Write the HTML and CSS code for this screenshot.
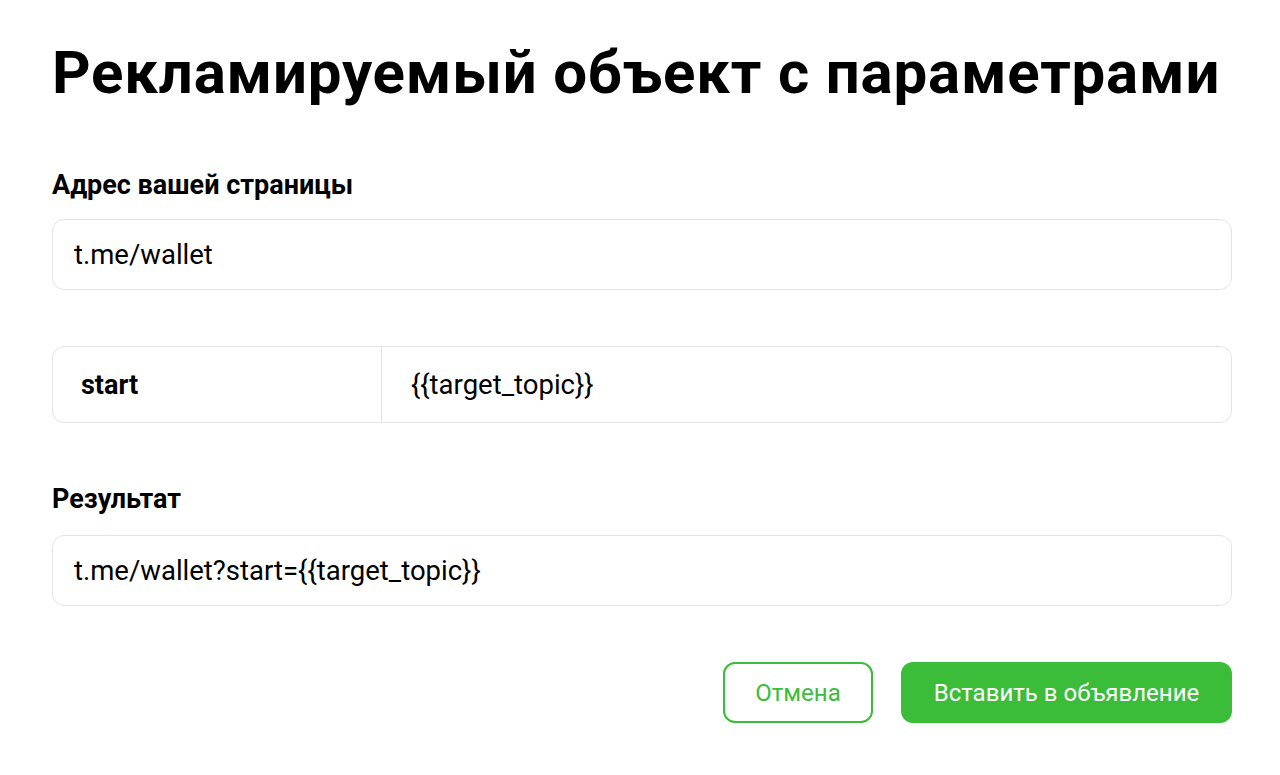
FILE: index.html
```html
<!DOCTYPE html>
<html lang="ru">
<head>
<meta charset="utf-8">
<title>Рекламируемый объект с параметрами</title>
<link rel="stylesheet" href="styles.css">
</head>
<body>
<main class="page">
  <h1 class="title">Рекламируемый объект с параметрами</h1>

  <div class="label label-first">Адрес вашей страницы</div>
  <div class="field field-first">t.me/wallet</div>

  <div class="param-row">
    <div class="param-key">start</div>
    <div class="param-value">{{target_topic}}</div>
  </div>

  <div class="label label-second">Результат</div>
  <div class="field field-second">t.me/wallet?start={{target_topic}}</div>

  <div class="actions">
    <button class="btn btn-outline">Отмена</button>
    <button class="btn btn-primary">Вставить в объявление</button>
  </div>
</main>
</body>
</html>
```

FILE: styles.css
```css
html, body {
  margin: 0;
  padding: 0;
  background: #ffffff;
}

body {
  font-family: Roboto, "Noto Sans", "Liberation Sans", sans-serif;
  color: #000000;
}

.page {
  width: 1180px;
  padding: 39px 48px 0 52px;
  display: flex;
  flex-direction: column;
}

.title {
  margin: 0;
  font-size: 60px;
  line-height: 68px;
  font-weight: 700;
  letter-spacing: 0.8px;
}

.label {
  font-size: 27px;
  line-height: 32px;
  font-weight: 700;
}

.label-first {
  margin-top: 62px;
}

.label-second {
  margin-top: 60px;
}

.field {
  box-sizing: border-box;
  height: 71px;
  border: 1.5px solid #e4e4e4;
  border-radius: 12px;
  display: flex;
  align-items: center;
  padding: 0 21px;
  font-size: 27.5px;
  line-height: 32px;
}

.field-first {
  margin-top: 18px;
}

.field-second {
  margin-top: 20px;
}

.param-row {
  box-sizing: border-box;
  margin-top: 56px;
  height: 77px;
  border: 1.5px solid #e4e4e4;
  border-radius: 12px;
  display: flex;
}

.param-key {
  box-sizing: border-box;
  width: 329px;
  border-right: 1.5px solid #e4e4e4;
  display: flex;
  align-items: center;
  padding-left: 28px;
  font-size: 27px;
  font-weight: 700;
}

.param-value {
  flex: 1;
  display: flex;
  align-items: center;
  padding-left: 29px;
  font-size: 27.5px;
}

.actions {
  margin-top: 56px;
  display: flex;
  justify-content: flex-end;
  gap: 28px;
}

.btn {
  box-sizing: border-box;
  height: 61px;
  border-radius: 12px;
  font-family: Roboto, "Noto Sans", "Liberation Sans", sans-serif;
  font-size: 24px;
  font-weight: 400;
  cursor: pointer;
  padding: 0;
}

.btn-outline {
  width: 150px;
  background: #ffffff;
  border: 2px solid #3bbd3a;
  color: #3bbd3a;
}

.btn-primary {
  width: 331px;
  background: #3bbd3a;
  border: none;
  color: #ffffff;
}
```
